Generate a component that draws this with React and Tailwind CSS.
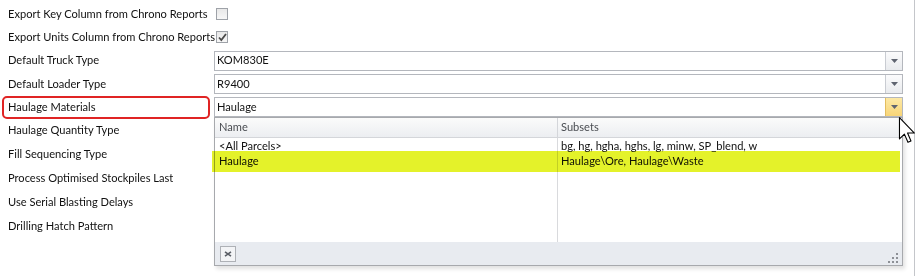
import React from 'react';

const font = { fontFamily: 'Lato, "Noto Sans", Arial, sans-serif' };

const labels = [
  'Export Key Column from Chrono Reports',
  'Export Units Column from Chrono Reports',
  'Default Truck Type',
  'Default Loader Type',
  'Haulage Materials',
  'Haulage Quantity Type',
  'Fill Sequencing Type',
  'Process Optimised Stockpiles Last',
  'Use Serial Blasting Delays',
  'Drilling Hatch Pattern',
];

const combos = {
  'Default Truck Type': { value: 'KOM830E' },
  'Default Loader Type': { value: 'R9400' },
  'Haulage Materials': { value: 'Haulage', active: true },
};

const parcels = [
  { name: '<All Parcels>', subsets: 'bg, hg, hgha, hghs, lg, minw, SP_blend, w' },
  { name: 'Haulage', subsets: 'Haulage\\Ore, Haulage\\Waste' },
];

function Arrow() {
  return (
    <svg width="7" height="4" viewBox="0 0 7 4">
      <path d="M0 0h7L3.5 4z" fill="#5f6470" />
    </svg>
  );
}

function Checkbox({ checked }) {
  return (
    <div className="flex h-[12px] w-[12px] items-center justify-center border border-[#9ea2a8] bg-gradient-to-b from-[#e8e8e8] to-[#f7f7f7]">
      {checked && (
        <svg width="9" height="9" viewBox="0 0 9 9">
          <path d="M1 4.5l2.3 2.5L8 1" stroke="#4a4a4a" strokeWidth="1.8" fill="none" />
        </svg>
      )}
    </div>
  );
}

function Combo({ value, active }) {
  return (
    <div className="flex h-[20px] w-[689px] border border-[#b4b7bd] bg-white">
      <div className="flex flex-1 items-center pl-[2px] text-[#111]">{value}</div>
      <div
        className={`flex w-[17px] items-center justify-center border-l ${
          active
            ? 'border-[#e3bd5f] bg-gradient-to-b from-[#fde9a5] to-[#f8d577]'
            : 'border-[#c9ccd2] bg-gradient-to-b from-[#fbfbfc] to-[#e9ebee]'
        }`}
      >
        <Arrow />
      </div>
    </div>
  );
}

export default function App() {
  return (
    <div className="relative h-[276px] w-[917px] overflow-hidden whitespace-nowrap bg-white text-[11.1px]" style={font}>
      <div className="flex h-full w-[915px] flex-col border-r border-[#c4c6ca] pt-[2.5px]">
        {labels.map((label, i) => (
          <div key={label} className={`flex shrink-0 items-center ${i < 5 ? 'h-[23.25px]' : 'h-[24px]'}`}>
            {label === 'Haulage Materials' ? (
              <div className="ml-[2px] mr-[4px] flex h-[23px] w-[208px] shrink-0 items-center rounded-[5px] border-2 border-[#e02424] pl-[4px] text-[#111]">
                {label}
              </div>
            ) : (
              <div className="w-[214px] shrink-0 pl-[8px] text-[#111]">{label}</div>
            )}
            {i < 2 && (
              <div className="pl-[2px]">
                <Checkbox checked={i === 1} />
              </div>
            )}
            {combos[label] && <Combo {...combos[label]} />}
          </div>
        ))}
      </div>

      {/* dropdown popup */}
      <div className="absolute left-[214px] top-[117px] flex h-[149px] w-[689px] flex-col border border-[#a7a9ad] bg-white shadow-[2px_3px_4px_rgba(0,0,0,0.12)]">
        <div className="grid h-[20px] shrink-0 grid-cols-[343px_1fr] border-b border-[#d4d6da] bg-gradient-to-b from-[#fbfbfb] to-[#eceef1] text-[#4a4d52]">
          <div className="flex items-center border-r border-[#d4d6da] pl-[4px]">Name</div>
          <div className="flex items-center pl-[3px]">Subsets</div>
        </div>
        <div className="grid flex-1 grid-cols-[343px_1fr]">
          <div className="border-r border-[#d9dadd] pt-[1px]">
            {parcels.map((p) => (
              <div key={p.name} className="flex h-[15px] items-center pl-[4px] text-[#111]">{p.name}</div>
            ))}
          </div>
          <div className="pt-[1px]">
            {parcels.map((p) => (
              <div key={p.name} className="flex h-[15px] items-center pl-[3px] text-[#111]">{p.subsets}</div>
            ))}
          </div>
        </div>
        <div className="flex h-[23px] shrink-0 items-center justify-between bg-[#e8ebf0] pl-[5px] pr-[4px]">
          <div className="flex h-[16px] w-[16px] items-center justify-center border border-[#aeb1b6] bg-[#f3f4f6]">
            <svg width="8" height="6" viewBox="0 0 8 6">
              <path d="M1 0.8l6 4.4M7 0.8L1 5.2" stroke="#5b5f66" strokeWidth="1.6" />
            </svg>
          </div>
          <svg width="10" height="10" viewBox="0 0 10 10" className="mt-[8px]">
            <rect x="8" y="0" width="2" height="2" fill="#8d9096" />
            <rect x="4" y="4" width="2" height="2" fill="#8d9096" />
            <rect x="8" y="4" width="2" height="2" fill="#8d9096" />
            <rect x="0" y="8" width="2" height="2" fill="#8d9096" />
            <rect x="4" y="8" width="2" height="2" fill="#8d9096" />
            <rect x="8" y="8" width="2" height="2" fill="#8d9096" />
          </svg>
        </div>
      </div>

      {/* highlighter mark */}
      <div className="pointer-events-none absolute left-[212px] top-[151px] h-[21px] w-[688px] bg-[#e4f22a] mix-blend-multiply" />

      {/* mouse cursor */}
      <svg className="absolute left-[898px] top-[117px]" width="18" height="26" viewBox="0 0 12 19">
        <path
          d="M0.5 0.5v15.5l3.6-3.5 2.6 6 2.2-1-2.5-5.8h5z"
          fill="#fff"
          stroke="#000"
          strokeWidth="0.8"
          strokeLinejoin="round"
        />
      </svg>
    </div>
  );
}
